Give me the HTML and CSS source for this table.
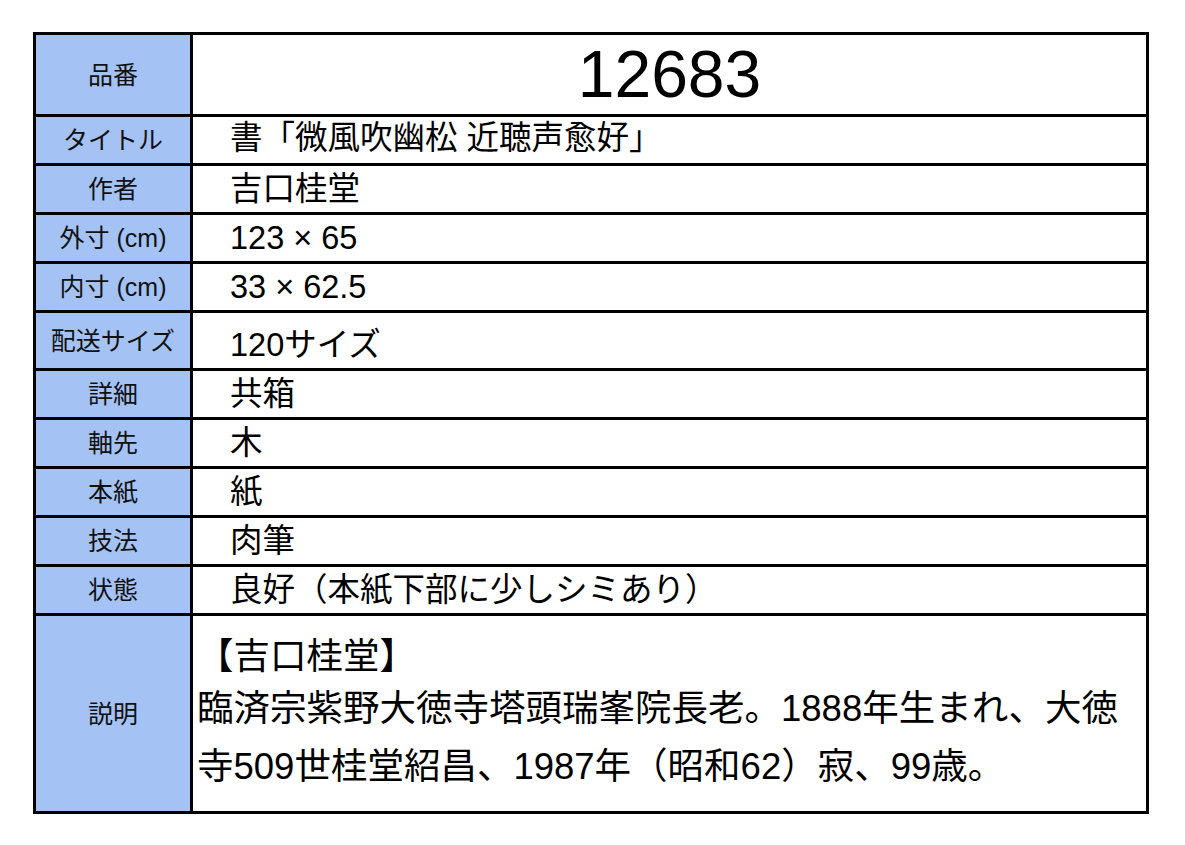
FILE: index.html
```html
<!DOCTYPE html>
<html lang="ja">
<head>
<meta charset="utf-8">
<title>12683</title>
<link rel="stylesheet" href="styles.css">
</head>
<body>
<div class="page">
  <div class="sheet">
    <div class="label">品番</div>
    <div class="value code">12683</div>
    <div class="label">タイトル</div>
    <div class="value title">書「微風吹幽松 近聴声愈好」</div>
    <div class="label">作者</div>
    <div class="value">吉口桂堂</div>
    <div class="label">外寸 (cm)</div>
    <div class="value">123 × 65</div>
    <div class="label">内寸 (cm)</div>
    <div class="value">33 × 62.5</div>
    <div class="label">配送サイズ</div>
    <div class="value shift">120サイズ</div>
    <div class="label">詳細</div>
    <div class="value">共箱</div>
    <div class="label">軸先</div>
    <div class="value">木</div>
    <div class="label">本紙</div>
    <div class="value">紙</div>
    <div class="label">技法</div>
    <div class="value">肉筆</div>
    <div class="label">状態</div>
    <div class="value">良好（本紙下部に少しシミあり）</div>
    <div class="label">説明</div>
    <div class="value desc">
      <div class="desc-head">【吉口桂堂】</div>
      <div class="desc-body">臨済宗紫野大徳寺塔頭瑞峯院長老。1888年生まれ、大徳<br>寺509世桂堂紹昌、1987年（昭和62）寂、99歳。</div>
    </div>
  </div>
</div>
</body>
</html>
```
FILE: styles.css
```css
html, body {
  margin: 0;
  background: #ffffff;
}

body {
  font-family: "Liberation Sans", "Noto Sans CJK JP", sans-serif;
  color: #000000;
}

.page {
  padding: 32px 0 0 33px;
}

.sheet {
  display: grid;
  box-sizing: border-box;
  width: 1116px;
  padding: 3px;
  gap: 3px;
  background: #000000;
  grid-template-columns: 154px 953px;
  grid-template-rows: 79px repeat(4, 46px) 55px repeat(5, 46px) 195px;
}

.label {
  background: #a4c2f4;
  display: flex;
  align-items: center;
  justify-content: center;
  font-size: 25px;
  line-height: 1.2;
  color: #111111;
  white-space: nowrap;
}

.value {
  background: #ffffff;
  display: flex;
  align-items: center;
  box-sizing: border-box;
  padding-left: 37px;
  font-size: 32.5px;
  line-height: 1.2;
  white-space: nowrap;
}

.code {
  justify-content: center;
  padding-left: 0;
  font-size: 66px;
}

.title {
  padding-bottom: 4px;
}

.shift {
  padding-top: 9px;
}

.desc {
  display: block;
  padding: 18px 0 0 4px;
  font-size: 36.5px;
}

.desc-head {
  line-height: 46px;
}

.desc-body {
  line-height: 58px;
}
```
